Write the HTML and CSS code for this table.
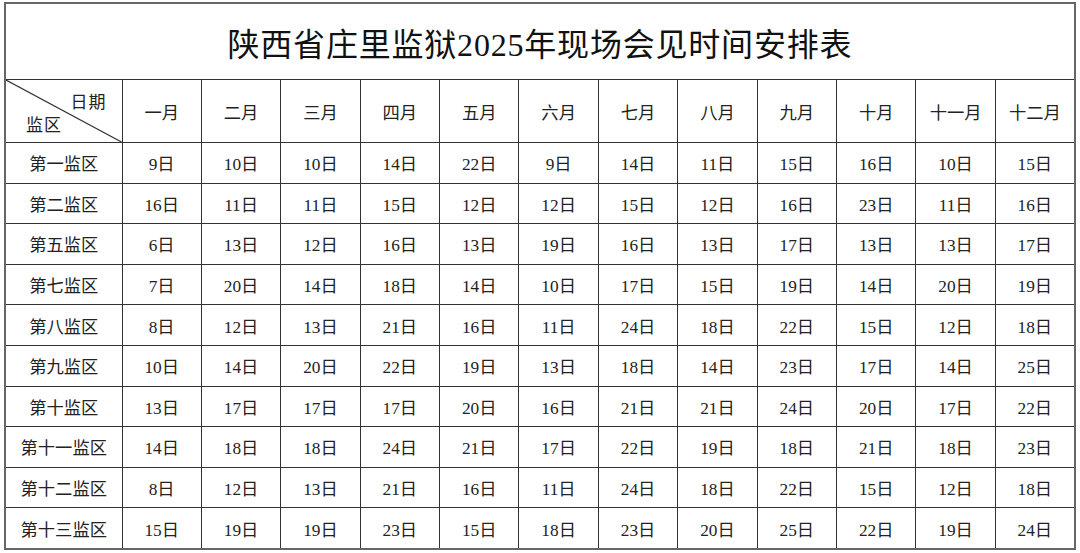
FILE: index.html
```html
<!DOCTYPE html>
<html lang="zh-CN">
<head>
<meta charset="utf-8">
<link rel="stylesheet" href="styles.css">
<title>会见时间安排表</title>
</head>
<body>
<div class="wrap">
<table class="sched">
<colgroup>
<col class="c-first">
<col span="12" class="c-month">
</colgroup>
<tr class="title-row"><th colspan="13" class="title">陕西省庄里监狱2025年现场会见时间安排表</th></tr>
<tr class="head-row">
<th class="corner"><svg class="diag" viewBox="0 0 100 100" preserveAspectRatio="none"><line x1="0" y1="0" x2="100" y2="100" stroke="#333" stroke-width="1.2" vector-effect="non-scaling-stroke"/></svg><span class="c-date">日期</span><span class="c-area">监区</span></th>
<th>一月</th><th>二月</th><th>三月</th><th>四月</th><th>五月</th><th>六月</th><th>七月</th><th>八月</th><th>九月</th><th>十月</th><th>十一月</th><th>十二月</th>
</tr>
<tr><td class="name">第一监区</td><td>9日</td><td>10日</td><td>10日</td><td>14日</td><td>22日</td><td>9日</td><td>14日</td><td>11日</td><td>15日</td><td>16日</td><td>10日</td><td>15日</td></tr>
<tr><td class="name">第二监区</td><td>16日</td><td>11日</td><td>11日</td><td>15日</td><td>12日</td><td>12日</td><td>15日</td><td>12日</td><td>16日</td><td>23日</td><td>11日</td><td>16日</td></tr>
<tr><td class="name">第五监区</td><td>6日</td><td>13日</td><td>12日</td><td>16日</td><td>13日</td><td>19日</td><td>16日</td><td>13日</td><td>17日</td><td>13日</td><td>13日</td><td>17日</td></tr>
<tr><td class="name">第七监区</td><td>7日</td><td>20日</td><td>14日</td><td>18日</td><td>14日</td><td>10日</td><td>17日</td><td>15日</td><td>19日</td><td>14日</td><td>20日</td><td>19日</td></tr>
<tr><td class="name">第八监区</td><td>8日</td><td>12日</td><td>13日</td><td>21日</td><td>16日</td><td>11日</td><td>24日</td><td>18日</td><td>22日</td><td>15日</td><td>12日</td><td>18日</td></tr>
<tr><td class="name">第九监区</td><td>10日</td><td>14日</td><td>20日</td><td>22日</td><td>19日</td><td>13日</td><td>18日</td><td>14日</td><td>23日</td><td>17日</td><td>14日</td><td>25日</td></tr>
<tr><td class="name">第十监区</td><td>13日</td><td>17日</td><td>17日</td><td>17日</td><td>20日</td><td>16日</td><td>21日</td><td>21日</td><td>24日</td><td>20日</td><td>17日</td><td>22日</td></tr>
<tr><td class="name">第十一监区</td><td>14日</td><td>18日</td><td>18日</td><td>24日</td><td>21日</td><td>17日</td><td>22日</td><td>19日</td><td>18日</td><td>21日</td><td>18日</td><td>23日</td></tr>
<tr><td class="name">第十二监区</td><td>8日</td><td>12日</td><td>13日</td><td>21日</td><td>16日</td><td>11日</td><td>24日</td><td>18日</td><td>22日</td><td>15日</td><td>12日</td><td>18日</td></tr>
<tr><td class="name">第十三监区</td><td>15日</td><td>19日</td><td>19日</td><td>23日</td><td>15日</td><td>18日</td><td>23日</td><td>20日</td><td>25日</td><td>22日</td><td>19日</td><td>24日</td></tr>
</table>
</div>
</body>
</html>
```
FILE: styles.css
```css
html, body {
  margin: 0;
  padding: 0;
  background: #fff;
}
.wrap {
  padding: 2px 0 0 4px;
}
.sched {
  border-collapse: collapse;
  table-layout: fixed;
  width: 1071px;
  font-family: "Liberation Serif", "Noto Sans CJK SC", serif;
  color: #222;
  border: 2px solid #666;
}
.c-first { width: 117px; }
.c-month { width: 79.4px; }
.sched th, .sched td {
  border: 1px solid #333;
  padding: 0;
  text-align: center;
  vertical-align: middle;
  font-weight: normal;
  font-size: 17.3px;
  height: 39.6px;
  white-space: nowrap;
}
.sched th.title {
  height: 75px;
  font-size: 32px;
  color: #111;
  letter-spacing: 0.8px;
  border-bottom: 1px solid #333;
}
.head-row th {
  height: 62px;
}
.sched th.corner {
  position: relative;
  padding: 0;
}
.diag {
  position: absolute;
  left: 0;
  top: 0;
  width: 100%;
  height: 100%;
}
.c-date {
  position: absolute;
  right: 15px;
  top: 8px;
  font-size: 17px;
  letter-spacing: 1px;
}
.c-area {
  position: absolute;
  left: 20px;
  top: 31px;
  font-size: 17px;
  letter-spacing: 1px;
}
```
